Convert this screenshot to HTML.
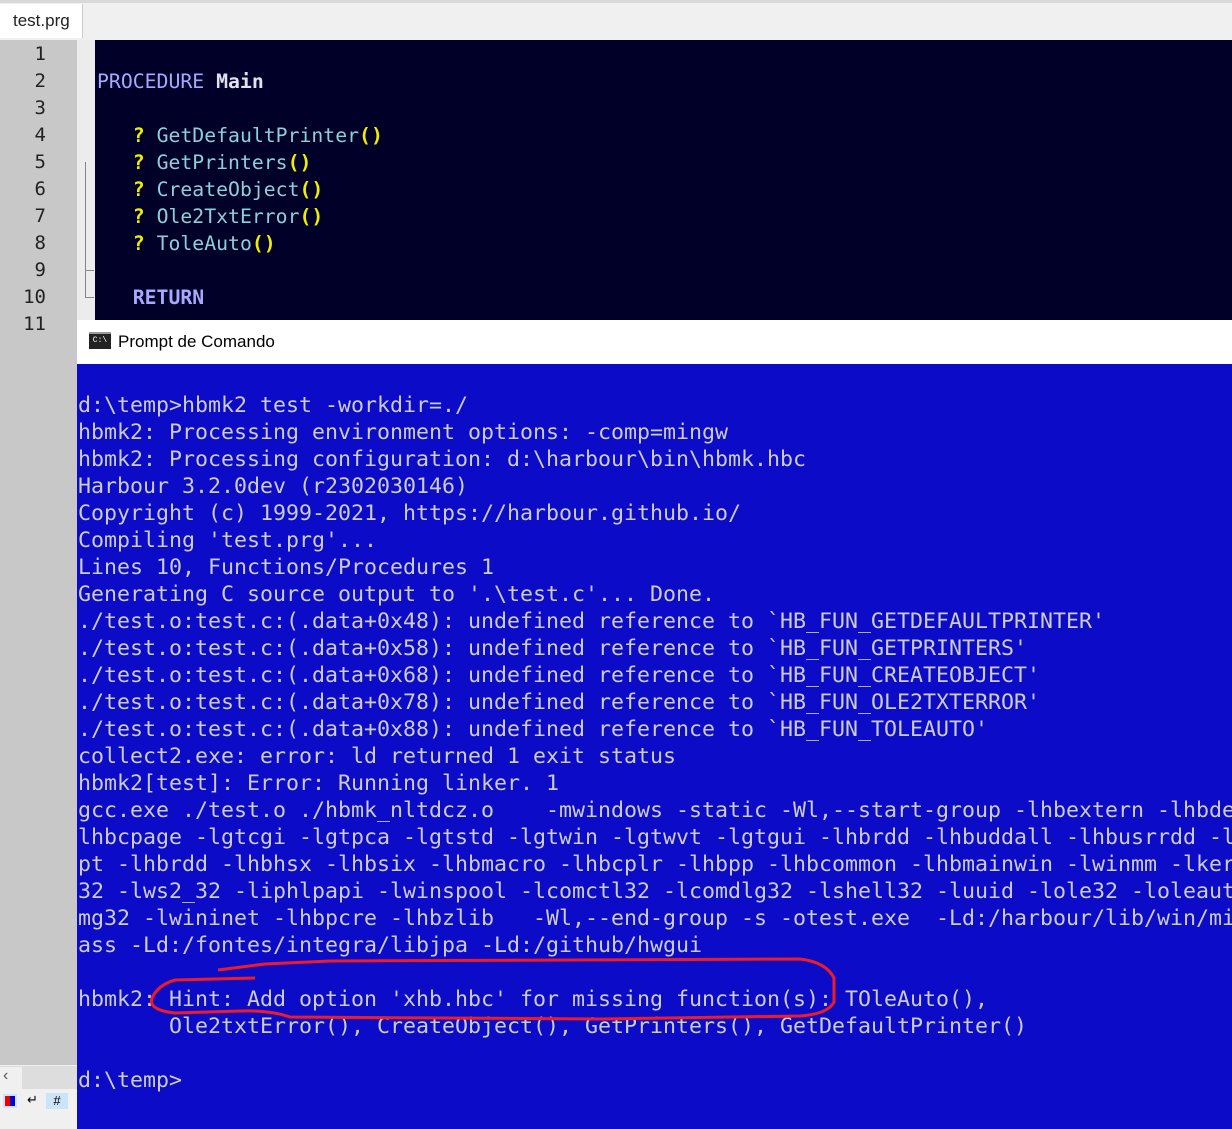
<!DOCTYPE html>
<html><head><meta charset="utf-8"><style>
body{margin:0;width:1232px;height:1129px;overflow:hidden;background:#f0f0f0;position:relative;font-family:"Liberation Sans",sans-serif}
.abs{position:absolute}
.mono{font-family:"DejaVu Sans Mono","Liberation Mono",monospace}
#tabs{left:0;top:0;width:1232px;height:40px;background:#f0f0f0;border-top:3px solid #d8d8d8;box-sizing:border-box}
#tab{left:0;top:4px;width:82px;height:34px;background:#fff;border-right:1px solid #ccc;font-size:17px;line-height:34px;text-indent:13px;color:#222}
#gut{left:0;top:40px;width:77px;height:1025px;background:#c8c8c8}
#fold{left:77px;top:40px;width:18px;height:1025px;background:#ececec}
#ed{left:95px;top:40px;width:1137px;height:290px;background:#000028}
pre{margin:0}
#nums{left:0;top:41px;width:46px;text-align:right;font-size:19px;line-height:27px;color:#222}
#code{left:97px;top:41px;font-size:19.8px;line-height:27px;color:#9ad}
.k{color:#a8a8ff}.w{color:#e0e0f0;font-weight:bold}.y{color:#ee0;font-weight:bold}.c{color:#8ed0d8}
#cmdt{left:77px;top:320px;width:1155px;height:44px;background:#fff;font-size:17px;line-height:44px;color:#000}
#cmd{left:77px;top:364px;width:1155px;height:765px;background:#0c0cc8}
#out{left:78px;top:392px;font-size:21.6px;line-height:27px;color:#cccccc;white-space:pre}
</style></head><body>
<div class="abs" id="tabs"></div>
<div class="abs" id="tab">test.prg</div>
<div class="abs" id="gut"></div>
<div class="abs" id="fold"></div>
<div class="abs" style="left:85px;top:162px;width:1px;height:136px;background:#888"></div>
<div class="abs" style="left:85px;top:270px;width:9px;height:1px;background:#888"></div>
<div class="abs" style="left:85px;top:297px;width:9px;height:1px;background:#888"></div>
<div class="abs" id="ed"></div>
<pre class="abs mono" id="nums">1
2
3
4
5
6
7
8
9
10
11</pre>
<pre class="abs mono" id="code">

<span class="k">PROCEDURE</span> <span class="w">Main</span>

   <span class="y">?</span> <span class="c">GetDefaultPrinter</span><span class="y">()</span>
   <span class="y">?</span> <span class="c">GetPrinters</span><span class="y">()</span>
   <span class="y">?</span> <span class="c">CreateObject</span><span class="y">()</span>
   <span class="y">?</span> <span class="c">Ole2TxtError</span><span class="y">()</span>
   <span class="y">?</span> <span class="c">ToleAuto</span><span class="y">()</span>

   <span class="k" style="font-weight:bold">RETURN</span></pre>
<div class="abs" id="cmdt"><span style="display:inline-block;width:22px;height:15px;background:#222;border-top:2px solid #999;vertical-align:middle;margin:0 7px 0 12px;position:relative;top:-2px;color:#fff;font-size:8px;line-height:14px;text-align:center;font-family:'Liberation Mono',monospace">C:\</span>Prompt de Comando</div>
<div class="abs" id="cmd"></div>
<pre class="abs mono" id="out">d:\temp>hbmk2 test -workdir=./
hbmk2: Processing environment options: -comp=mingw
hbmk2: Processing configuration: d:\harbour\bin\hbmk.hbc
Harbour 3.2.0dev (r2302030146)
Copyright (c) 1999-2021, https://harbour.github.io/
Compiling 'test.prg'...
Lines 10, Functions/Procedures 1
Generating C source output to '.\test.c'... Done.
./test.o:test.c:(.data+0x48): undefined reference to `HB_FUN_GETDEFAULTPRINTER'
./test.o:test.c:(.data+0x58): undefined reference to `HB_FUN_GETPRINTERS'
./test.o:test.c:(.data+0x68): undefined reference to `HB_FUN_CREATEOBJECT'
./test.o:test.c:(.data+0x78): undefined reference to `HB_FUN_OLE2TXTERROR'
./test.o:test.c:(.data+0x88): undefined reference to `HB_FUN_TOLEAUTO'
collect2.exe: error: ld returned 1 exit status
hbmk2[test]: Error: Running linker. 1
gcc.exe ./test.o ./hbmk_nltdcz.o    -mwindows -static -Wl,--start-group -lhbextern -lhbde
lhbcpage -lgtcgi -lgtpca -lgtstd -lgtwin -lgtwvt -lgtgui -lhbrdd -lhbuddall -lhbusrrdd -l
pt -lhbrdd -lhbhsx -lhbsix -lhbmacro -lhbcplr -lhbpp -lhbcommon -lhbmainwin -lwinmm -lker
32 -lws2_32 -liphlpapi -lwinspool -lcomctl32 -lcomdlg32 -lshell32 -luuid -lole32 -loleaut
mg32 -lwininet -lhbpcre -lhbzlib   -Wl,--end-group -s -otest.exe  -Ld:/harbour/lib/win/mi
ass -Ld:/fontes/integra/libjpa -Ld:/github/hwgui

hbmk2: Hint: Add option 'xhb.hbc' for missing function(s): TOleAuto(),
       Ole2txtError(), CreateObject(), GetPrinters(), GetDefaultPrinter()

d:\temp></pre>
<svg class="abs" style="left:0;top:0" width="1232" height="1129">
<path d="M218,970 L265,964 L330,961 L800,959 Q826,962 834,978 L834,1002 Q828,1014 800,1016 L600,1019 L290,1017 Q270,1010 240,1011 L175,1013 Q148,1010 152,998 Q158,985 175,980 L255,978" fill="none" stroke="#ee1c24" stroke-width="3"/>
</svg>
<div class="abs" style="left:0;top:1066px;width:77px;height:22px;background:#f0f0f0;border-top:1px solid #ddd"><span style="position:absolute;left:3px;top:0;font-size:16px;color:#555">‹</span><div style="position:absolute;left:22px;top:0;width:55px;height:22px;background:#ddd"></div></div>
<div class="abs" style="left:0;top:1090px;width:77px;height:39px;background:#f0f0f0">
<div style="position:absolute;left:3px;top:4px;width:14px;height:14px;background:#cce4f7"><div style="margin:2px;width:10px;height:10px;background:linear-gradient(90deg,#e00 50%,#00c 50%)"></div></div>
<span style="position:absolute;left:27px;top:2px;font-size:13px">↵</span>
<div style="position:absolute;left:46px;top:3px;width:22px;height:16px;background:#cce4f7;font-size:13px;text-align:center">#</div>
</div>
</body></html>
